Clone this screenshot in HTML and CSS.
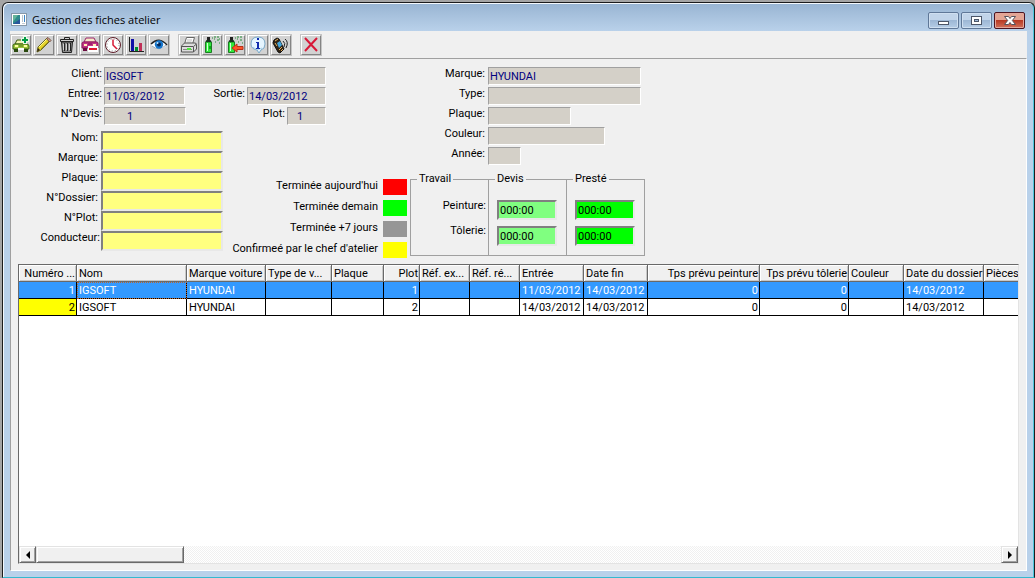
FILE: index.html
```html
<!DOCTYPE html>
<html lang="fr">
<head>
<meta charset="utf-8">
<title>Gestion des fiches atelier</title>
<link rel="stylesheet" href="styles.css">
</head>
<body>
<main class="window">
  <header class="titlebar">
    <svg class="app-icon" viewBox="0 0 16 14" aria-hidden="true">
      <rect x=".5" y=".5" width="15" height="12" fill="#fff" stroke="#8798a8"/>
      <rect x="2" y="2" width="7" height="9" fill="#2f8a8c"/><path d="M2 2h5L2 9z" fill="#64b49a"/><path d="M2 11l7-5v5z" fill="#28579c"/>
      <rect x="11" y="2" width="1" height="7" fill="#b8c4cc"/><rect x="13" y="2" width="1" height="7" fill="#3d87c8"/><rect x="11" y="10" width="3" height="1" fill="#c3ccd3"/>
    </svg>
    <h1 class="title">Gestion des fiches atelier</h1>
    <div class="controls">
      <button class="ctl" aria-label="Réduire"><svg viewBox="0 0 29 15"><rect x="9.5" y="8.500" width="10" height="3" fill="#fff" stroke="#4c5668"/></svg></button>
      <button class="ctl" aria-label="Agrandir"><svg viewBox="0 0 29 15"><rect x="9.5" y="3.500" width="10" height="8" fill="#fff" stroke="#4c5668"/><rect x="12.500" y="6.500" width="4" height="2" fill="#9fb9d8" stroke="#4c5668"/></svg></button>
      <button class="ctl ctl-close" aria-label="Fermer"><svg viewBox="0 0 29 15"><path d="M9.500 3.500h4l1.500 2 1.500-2h4l-3.200 4 3.200 4h-4l-1.500-2-1.500 2h-4l3.200-4z" fill="#fff" stroke="#54525c"/></svg></button>
    </div>
  </header>

  <nav class="toolbar" aria-label="Outils">
    <div class="group">
      <button class="tool" aria-label="Ajouter">
        <svg viewBox="0 0 18 18"><path d="M3 8l2-4h7l3 4z" fill="#f4f4b0" stroke="#3c5c10"/><path d="M1 9q0-1 2-1h11q3 0 3 2v3H1z" fill="#9cc43c" stroke="#3c6410"/><path d="M2 13h4v3H2zM12 13h4v3h-4z" fill="#2c4a10"/><path d="M6 13h6" stroke="#fff" stroke-width="2"/><path d="M3 10h3M12 10h3" stroke="#ffffa0" stroke-width="2"/><path d="M7 10h4" stroke="#4a7818"/><path d="M13 0v8M9 4h8" stroke="#e8f8e8" stroke-width="4"/><path d="M13 1v6M10 4h6" stroke="#009a42" stroke-width="2"/></svg>
      </button>
      <button class="tool" aria-label="Modifier">
        <svg viewBox="0 0 18 18"><path d="M2 16l1-5 9-9 3 3-9 9z" fill="#e6d62c" stroke="#6b6b24"/><path d="M4 11l8-8" stroke="#fff79a"/><path d="M6 13l8-8" stroke="#a6941a"/><path d="M11.500 2.500l1.500-1 3 3-1.500 1.500z" fill="#d6a08c" stroke="#6e4e42"/><path d="M3 12l2 2-3 2z" fill="#332716"/></svg>
      </button>
      <button class="tool" aria-label="Supprimer">
        <svg viewBox="0 0 18 18"><path d="M6.500 3V1.500h5V3M2.500 3.500h13v2h-13z" fill="#ccc" stroke="#222"/><path d="M3.500 6h11l-1 10.500h-9z" fill="#8a8a8a" stroke="#222"/><path d="M6.500 7v8M9.500 7v8M12.500 7v8" stroke="#222"/><path d="M5.500 8v6M8.500 8v6M11.500 8v6" stroke="#d0d0d0"/></svg>
      </button>
      <button class="tool" aria-label="Retirer le véhicule">
        <svg viewBox="0 0 18 18"><path d="M3 6l2-4h8l2 4z" fill="#f6e9c8" stroke="#9c246c"/><path d="M1 7q0-1 2-1h12q2 0 2 1v5H1z" fill="#c23488" stroke="#8c1858"/><path d="M2 12h4v3H2zM12 12h4v3h-4z" fill="#6c0c40"/><path d="M3 9h3M12 9h3" stroke="#fff0b0" stroke-width="2"/><path d="M7 8h4" stroke="#781050"/><rect x="7" y="10" width="10" height="6" fill="#fff"/><rect x="8" y="12" width="8" height="2" fill="#e01830"/></svg>
      </button>
      <button class="tool" aria-label="Horaire">
        <svg viewBox="0 0 18 18"><circle cx="9" cy="9" r="7.500" fill="#fff" stroke="#5c1c28"/><circle cx="9" cy="9" r="6" fill="none" stroke="#888" stroke-dasharray="1 2.140"/><path d="M9 3.500V9l4 4" fill="none" stroke="#d61834" stroke-width="1.500"/></svg>
      </button>
      <button class="tool" aria-label="Statistiques">
        <svg viewBox="0 0 18 18"><path d="M2.500 1v14.500H17" fill="none" stroke="#222"/><rect x="4" y="3" width="3" height="12" fill="#1010a8"/><rect x="8" y="11" width="3" height="4" fill="#008c30"/><rect x="12" y="7" width="3" height="8" fill="#c03058"/></svg>
      </button>
      <button class="tool" aria-label="Voir">
        <svg viewBox="0 0 18 18"><path d="M1 9q8-9 16 0-8 8-16 0z" fill="#fff"/><path d="M1 8q8-8 16 1" fill="none" stroke="#222" stroke-width="1.500"/><path d="M2 10q7 6 14-1" fill="none" stroke="#9ab"/><circle cx="9" cy="8.500" r="4.200" fill="#1676cc"/><circle cx="9" cy="8.500" r="2" fill="#062858"/><circle cx="7.500" cy="7" r="1" fill="#bfe4ff"/></svg>
      </button>
    </div>
    <div class="group">
      <button class="tool" aria-label="Imprimer">
        <svg viewBox="0 0 18 18"><path d="M4.500 8l2-6.500h8L12.500 8z" fill="#fff" stroke="#666"/><path d="M7 4h5M6.500 6h5" stroke="#bbb"/><path d="M1.500 10l3-3h11l1 2v4l-3 3h-12z" fill="#dcdcdc" stroke="#555"/><path d="M2 10.500h11.500l3-2.500M13.500 11v5" fill="none" stroke="#555"/><path d="M3 13.500h9" stroke="#888"/><rect x="7" y="12" width="4" height="2" fill="#50e840"/></svg>
      </button>
      <button class="tool" aria-label="Peinture">
        <svg viewBox="0 0 18 18"><path d="M2.500 6h6v10.500h-6z" fill="#32e83c" stroke="#1d7c24"/><path d="M2.500 6l1-2h4l1 2z" fill="#173820"/><path d="M4 1h3v3H4z" fill="#222"/><path d="M4.500 7v8" stroke="#d6ffd8"/><path d="M6 10h2v3H6z" fill="#11a71c"/><path d="M9 2h1M11 1h2M14 1h2M11 3h1M14 4h2M12 6h1M16 7h1M16 3h1" stroke="#228c34"/></svg>
      </button>
      <button class="tool" aria-label="Retour peinture">
        <svg viewBox="0 0 18 18"><path d="M2.500 6h6v10.500h-6z" fill="#32e83c" stroke="#1d7c24"/><path d="M2.500 6l1-2h4l1 2z" fill="#173820"/><path d="M4 1h3v3H4z" fill="#222"/><path d="M4.500 7v8" stroke="#d6ffd8"/><path d="M9 2h1M11 1h2M14 1h2M11 3h1M14 4h2M12 6h1M16 7h1" stroke="#228c34"/><path d="M6 12l5-4v2.500h6v3h-6V16z" fill="#ff5428" stroke="#b83018"/></svg>
      </button>
      <button class="tool" aria-label="Informations">
        <svg viewBox="0 0 18 18"><path d="M9 1q7 0 7 7 0 5-4 6l-2 3-2-3Q2 13 2 8q0-7 7-7z" fill="#e5f5ff" stroke="#7ba9c8"/><path d="M4 11q4 4 9 1" fill="none" stroke="#a8d0e8"/><path d="M8 2h2v2H8zM7 6h3v6h1v1H7v-1h1V7H7z" fill="#102cae"/></svg>
      </button>
      <button class="tool" aria-label="Téléphoner">
        <svg viewBox="0 0 18 18"><path d="M2 4l3-2 2 1 5 10-4 4-2-1L1 7z" fill="#322414" stroke="#111"/><path d="M3 5l3-2M3 7l2 3" stroke="#e2b362"/><path d="M5 7l3-2 2 4-3 3z" fill="#42a6dc"/><path d="M7 14l3-3M9 15l2-2" stroke="#e5ab55"/><path d="M11 5q3 2 1 6M13 3q4 3 1 9" fill="none" stroke="#222"/></svg>
      </button>
    </div>
    <div class="group">
      <button class="tool" aria-label="Quitter">
        <svg viewBox="0 0 18 18"><path d="M3 2l12 13M15 2L3 15" fill="none" stroke="#d81838" stroke-width="2"/></svg>
      </button>
    </div>
  </nav>

  <section class="content">
    <div class="form">
      <div class="left">
        <div class="client">
          <label for="client">Client:</label><input id="client" class="info wide" value="IGSOFT" readonly>
          <label for="entree">Entree:</label><input id="entree" class="info date" value="11/03/2012" readonly>
          <label for="sortie">Sortie:</label><input id="sortie" class="info" value="14/03/2012" readonly>
          <label for="devis">N°Devis:</label><input id="devis" class="info number" value="1" readonly>
          <label for="plot" class="plot-label">Plot:</label><input id="plot" class="info plot" value="1" readonly>
        </div>
        <div class="lower">
          <div class="filters">
            <label for="f-nom">Nom:</label><input id="f-nom" class="filter">
            <label for="f-marque">Marque:</label><input id="f-marque" class="filter">
            <label for="f-plaque">Plaque:</label><input id="f-plaque" class="filter">
            <label for="f-dossier">N°Dossier:</label><input id="f-dossier" class="filter">
            <label for="f-plot">N°Plot:</label><input id="f-plot" class="filter">
            <label for="f-cond" class="tight">Conducteur:</label><input id="f-cond" class="filter">
          </div>
          <ul class="key">
            <li>Terminée aujourd'hui<span class="swatch red"></span></li>
            <li>Terminée demain<span class="swatch green"></span></li>
            <li>Terminée +7 jours<span class="swatch grey"></span></li>
            <li>Confirmeé par le chef d'atelier<span class="swatch yellow"></span></li>
          </ul>
        </div>
      </div>
      <div class="right">
        <div class="vehicle">
          <label for="marque">Marque:</label><input id="marque" class="info w-full" value="HYUNDAI" readonly>
          <label for="type">Type:</label><input id="type" class="info w-full" readonly>
          <label for="plaque">Plaque:</label><input id="plaque" class="info w-plate" readonly>
          <label for="couleur">Couleur:</label><input id="couleur" class="info w-colour" readonly>
          <label for="annee">Année:</label><input id="annee" class="info w-year" readonly>
        </div>
        <div class="work">
          <fieldset class="box names"><legend>Travail</legend><span>Peinture:</span><span>Tôlerie:</span></fieldset>
          <fieldset class="box"><legend>Devis</legend><input class="time" value="000:00" aria-label="Devis peinture"><input class="time" value="000:00" aria-label="Devis tôlerie"></fieldset>
          <fieldset class="box"><legend>Presté</legend><input class="time done" value="000:00" aria-label="Presté peinture"><input class="time done" value="000:00" aria-label="Presté tôlerie"></fieldset>
        </div>
      </div>
    </div>

    <div class="list">
      <div class="rows">
        <table>
          <colgroup><col class="c58"><col class="c110"><col class="c79"><col class="c66"><col class="c52"><col class="c36"><col class="c50"><col class="c50"><col class="c64"><col class="c64"><col class="c112"><col class="c89"><col class="c55"><col class="c80"><col class="c80"></colgroup>
          <thead><tr><th class="num">Numéro ...</th><th>Nom</th><th>Marque voiture</th><th>Type de v...</th><th>Plaque</th><th class="num">Plot</th><th>Réf. ex...</th><th>Réf. ré...</th><th>Entrée</th><th>Date fin</th><th class="num">Tps prévu peinture</th><th class="num">Tps prévu tôlerie</th><th>Couleur</th><th>Date du dossier</th><th>Pièces</th></tr></thead>
          <tbody>
            <tr class="selected"><td class="num">1</td><td class="focus">IGSOFT</td><td>HYUNDAI</td><td></td><td></td><td class="num">1</td><td></td><td></td><td>11/03/2012</td><td>14/03/2012</td><td class="num">0</td><td class="num">0</td><td></td><td>14/03/2012</td><td></td></tr>
            <tr><td class="num confirmed">2</td><td>IGSOFT</td><td>HYUNDAI</td><td></td><td></td><td class="num">2</td><td></td><td></td><td>14/03/2012</td><td>14/03/2012</td><td class="num">0</td><td class="num">0</td><td></td><td>14/03/2012</td><td></td></tr>
          </tbody>
        </table>
      </div>
      <div class="scrollbar">
        <button class="arrow" aria-label="Défiler à gauche"><svg viewBox="0 0 8 8"><path d="M6 0v8L2 4z"/></svg></button>
        <div class="thumb"></div>
        <button class="arrow end" aria-label="Défiler à droite"><svg viewBox="0 0 8 8"><path d="M2 0v8l4-4z"/></svg></button>
      </div>
    </div>
  </section>
</main>
</body>
</html>
```
FILE: styles.css
```css
* { box-sizing: border-box; }
body {
  margin: 0;
  padding: 2px 0 0 2px;
  background: #a5a5a5;
  font: 11px/16px Roboto, "Liberation Sans", Arial, sans-serif;
  color: #000;
}
button, input { font: inherit; color: inherit; margin: 0; border-radius: 0; }
button { padding: 0; }

.window {
  min-height: calc(100vh - 2px);
  display: flex;
  flex-direction: column;
  padding: 0 7px 6px;
  border: 1px solid #1c1c1c;
  border-bottom-color: #35b9cf;
  border-radius: 6px 6px 0 0;
  background: linear-gradient(#98b4d2, #b9d1ea 28px);
  box-shadow: inset 1px 1px #f4f8fc, inset -1px 0 #4cc6dc;
}

.titlebar { display: flex; align-items: center; height: 28px; padding: 6px 2px 0 1px; gap: 5px; }
.app-icon { width: 16px; height: 14px; }
.title { flex: 1; margin: 0; font: 11px/16px "Open Sans", "Segoe UI", sans-serif; }
.controls { display: flex; gap: 2px; }
.ctl {
  width: 31px;
  height: 17px;
  border: 1px solid #5f7797;
  border-radius: 2px;
  background: linear-gradient(#c1d4e9 45%, #9db7d5 50%, #b5cde6);
  box-shadow: inset 0 0 0 1px #cfdff0;
}
.ctl-close {
  border-color: #4c1420;
  background: linear-gradient(#e3a594 45%, #b83a24 50%, #d1705a);
  box-shadow: inset 0 0 0 1px #e3a79b;
}
.ctl svg { display: block; width: 29px; height: 15px; }

.toolbar { display: flex; gap: 8px; padding: 3px 0 2px; background: #f0f0f0; }
.group { display: flex; gap: 1px; }
.tool {
  width: 22px;
  height: 22px;
  background: #d2d2d2;
  border: 2px solid;
  border-color: #fff #848484 #848484 #fff;
  outline: 1px solid #c4c4c4;
  outline-offset: -1px;
}
.tool svg { display: block; width: 18px; height: 18px; }

.content {
  flex: 1;
  display: flex;
  flex-direction: column;
  padding: 8px 7px 6px;
  background: #f0f0f0;
  border: 1px solid;
  border-color: #a0a0a0 #fff #fff #a0a0a0;
}
.form { display: flex; gap: 3px; padding-bottom: 6px; }
.left { width: 389px; }
label, .names span { text-align: right; }
label { line-height: 14px; }

.info {
  height: 18px;
  padding: 0 1px;
  min-width: 0;
  color: #000080;
  background: #d4d0c8;
  border: 1px solid;
  border-color: #a0a0a0 #fff #fff #a0a0a0;
}
.client {
  display: grid;
  grid-template-columns: 85px 82px 59px 79px;
  grid-auto-rows: 18px;
  gap: 2px 1px;
}
.client label { padding-right: 1px; }
.wide { grid-column: span 3; }
.date { width: 81px; }
.number { padding-left: 22px; }
.plot-label { grid-column: 3; margin-right: -40px; padding-right: 4px; }
.plot { width: 39px; padding-left: 9px; justify-self: end; }

.lower { display: flex; justify-content: space-between; padding-top: 6px; }
.filters { display: grid; grid-template-columns: 80px 122px; grid-auto-rows: 20px; column-gap: 3px; }
.filters .tight { margin-right: -2px; }
.filter, .time {
  min-width: 0;
  border: 2px solid;
  border-color: #808080 #e8e8e8 #e8e8e8 #808080;
}
.filter { background: #ffff80; }
.key { display: grid; align-content: start; gap: 5px; margin: 0; padding: 48px 0 0; list-style: none; }
.key li { display: flex; justify-content: flex-end; gap: 5px; line-height: 13px; height: 16px; }
.swatch { width: 24px; height: 16px; }
.red { background: #f00; }
.green { background: #0f0; }
.grey { background: #969696; }
.yellow { background: #ff0; }

.vehicle { display: grid; grid-template-columns: 75px 153px; grid-auto-rows: 18px; gap: 2px 3px; padding-bottom: 6px; }
.w-plate { width: 83px; }
.w-colour { width: 117px; }
.w-year { width: 33px; }

.work { display: flex; }
.box {
  display: flex;
  flex-direction: column;
  gap: 6px;
  width: 78px;
  min-width: 0;
  height: 85px;
  margin: 0;
  padding: 13px 6px 0;
  border: 1px solid #a0a0a0;
}
.box + .box { border-left-width: 0; padding-left: 8px; }
.box legend { padding: 0 2px; margin-left: -2px; line-height: 16px; }
.names { width: 79px; padding: 11px 2px 0; gap: 9px; }
.box.names legend { margin-left: 4px; }
.time { width: 60px; height: 20px; padding: 0 1px; background: #80ff80; }
.done { background: #0f0; }

.list {
  flex: 1;
  display: flex;
  flex-direction: column;
  background: #fff;
  border: 1px solid;
  border-color: #696969 #e3e3e3 #e3e3e3 #696969;
}
.rows { flex: 1; width: 0; min-width: 100%; overflow: hidden; }
table { table-layout: fixed; border-collapse: separate; border-spacing: 0; width: 1045px; }
.c36 { width: 36px; } .c50 { width: 50px; } .c52 { width: 52px; } .c55 { width: 55px; }
.c58 { width: 58px; } .c64 { width: 64px; } .c66 { width: 66px; } .c79 { width: 79px; }
.c80 { width: 80px; } .c89 { width: 89px; } .c110 { width: 110px; } .c112 { width: 112px; }
th, td {
  height: 17px;
  padding: 0 1px 0 2px;
  line-height: 15px;
  text-align: left;
  font-weight: normal;
  white-space: nowrap;
  border-right: 1px solid #000;
  border-bottom: 1px solid #000;
}
th { background: #f0f0f0; border-color: #696969; box-shadow: inset 1px 1px #fff, inset -1px -1px #c8c8c8; }
.num { text-align: right; }
.selected td { background: #3399ff; color: #fff; }
.selected .focus { outline: 1px dotted #b8642c; outline-offset: -1px; }
td.confirmed { background: #ff0; }

.scrollbar {
  display: flex;
  height: 17px;
  background: repeating-conic-gradient(#f0f0f0 0 25%, #fff 0 50%) 0 0 / 2px 2px;
}
.arrow, .thumb {
  background: #f0f0f0;
  border: 1px solid;
  border-color: #e3e3e3 #696969 #696969 #e3e3e3;
  box-shadow: inset 1px 1px #fff, inset -1px -1px #a0a0a0;
}
.arrow { display: grid; place-items: center; width: 17px; }
.arrow svg { width: 8px; height: 8px; }
.thumb { width: 148px; }
.end { margin-left: auto; }
```
